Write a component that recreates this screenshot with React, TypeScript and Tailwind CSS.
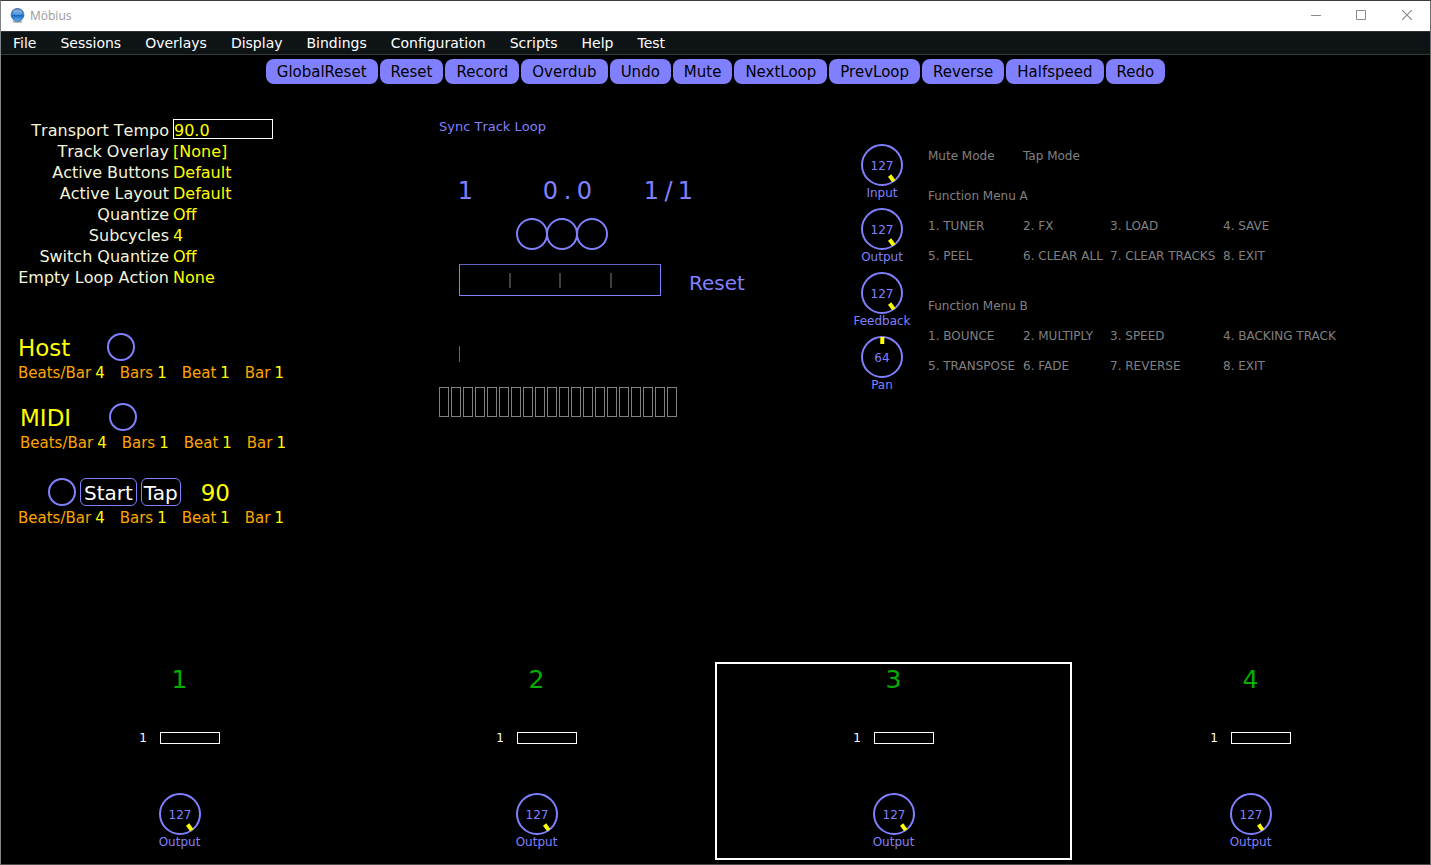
import { useId, useState } from "react";

const menus = ["File", "Sessions", "Overlays", "Display", "Bindings", "Configuration", "Scripts", "Help", "Test"];

const actions = [
  "GlobalReset", "Reset", "Record", "Overdub", "Undo", "Mute",
  "NextLoop", "PrevLoop", "Reverse", "Halfspeed", "Redo",
];

const parameters = [
  ["Track Overlay", "[None]"],
  ["Active Buttons", "Default"],
  ["Active Layout", "Default"],
  ["Quantize", "Off"],
  ["Subcycles", "4"],
  ["Switch Quantize", "Off"],
  ["Empty Loop Action", "None"],
];

const functionMenus = [
  {
    title: "Function Menu A",
    items: ["1. TUNER", "2. FX", "3. LOAD", "4. SAVE", "5. PEEL", "6. CLEAR ALL", "7. CLEAR TRACKS", "8. EXIT"],
  },
  {
    title: "Function Menu B",
    items: ["1. BOUNCE", "2. MULTIPLY", "3. SPEED", "4. BACKING TRACK", "5. TRANSPOSE", "6. FADE", "7. REVERSE", "8. EXIT"],
  },
];

const menuColumns = "grid grid-cols-[95px_87px_113px_auto] auto-rows-[30px] items-center";

function TitleBar() {
  return (
    <header className="flex h-[30px] items-center bg-white pl-2">
      <svg viewBox="0 0 16 16" className="h-4 w-4" aria-hidden="true">
        <defs>
          <linearGradient id="orb" x1="0" y1="0" x2="0" y2="1">
            <stop offset="0" stopColor="#34689f" />
            <stop offset="0.45" stopColor="#3f8fdc" />
            <stop offset="0.55" stopColor="#1a66bc" />
            <stop offset="1" stopColor="#5fb8fa" />
          </linearGradient>
          <linearGradient id="gloss" x1="0" y1="0" x2="0" y2="1">
            <stop offset="0" stopColor="#86b2dc" />
            <stop offset="1" stopColor="#4f98dc" />
          </linearGradient>
        </defs>
        <ellipse cx="8.5" cy="13.4" rx="5" ry="1.5" fill="#b5b5b5" />
        <circle cx="8.5" cy="6.8" r="6.4" fill="url(#orb)" stroke="#2a5688" strokeWidth="0.7" />
        <ellipse cx="8.5" cy="4.2" rx="4.6" ry="2.6" fill="url(#gloss)" />
      </svg>
      <h1 className="ml-[5px] font-['Open_Sans',sans-serif] text-[12px] leading-4 text-[#999999]">Möbius</h1>
      <div className="ml-auto flex h-full pb-0.5 text-[#8c8c8c]">
        <button aria-label="Minimize" className="flex w-[45px] items-center justify-center">
          <svg viewBox="0 0 10 10" className="h-[10px] w-[10px]"><path d="M0 5.5H10" stroke="currentColor" /></svg>
        </button>
        <button aria-label="Maximize" className="flex w-[45px] items-center justify-center">
          <svg viewBox="0 0 10 10" className="h-[10px] w-[10px]"><path d="M.5 .5H9.5V9.5H.5Z" fill="none" stroke="currentColor" /></svg>
        </button>
        <button aria-label="Close" className="flex w-[47px] items-center justify-center">
          <svg viewBox="0 0 10 10" className="h-[10px] w-[10px]"><path d="M0 0L10 10M10 0L0 10" stroke="currentColor" strokeWidth="1.2" /></svg>
        </button>
      </div>
    </header>
  );
}

function Knob({ label, initial }: { label: string; initial: number }) {
  const [value, setValue] = useState(initial);
  const id = useId();
  const angle = Math.round((value / 127) * 288 - 144);
  return (
    <div className="relative flex flex-col items-center text-[#8080ff]">
      <svg viewBox="-21 -21 42 42" className="h-[42px] w-[42px]" aria-hidden="true">
        <circle r="20" fill="none" stroke="currentColor" strokeWidth="2" />
        <rect x="-2" y="-20" width="4" height="7" fill="#ffff00" transform={`rotate(${angle})`} />
        <text y="5" textAnchor="middle" fill="currentColor" className="text-[12px]">{value}</text>
      </svg>
      <label htmlFor={id} className="text-[12px] leading-[14px]">{label}</label>
      <input
        id={id}
        type="range"
        min={0}
        max={127}
        value={value}
        onChange={(e) => setValue(Number(e.target.value))}
        className="absolute inset-x-0 top-0 h-[42px] w-full cursor-pointer opacity-0"
      />
    </div>
  );
}

function BeatInfo() {
  return (
    <dl className="flex gap-[15px] text-[15px] leading-[22px]">
      {[["Beats/Bar", 4], ["Bars", 1], ["Beat", 1], ["Bar", 1]].map(([name, count]) => (
        <div key={name} className="flex gap-1">
          <dt className="text-[#ffa500]">{name}</dt>
          <dd className="text-[#ffff00]">{count}</dd>
        </div>
      ))}
    </dl>
  );
}

function BeatLight() {
  return <span className="h-7 w-7 shrink-0 rounded-full border-2 border-[#8080ff]" />;
}

function SyncSource({ name }: { name: string }) {
  return (
    <section>
      <div className="flex h-[30px] items-center">
        <h2 className="w-[89px] pt-0.5 text-[23px] leading-7 text-[#ffff00]">{name}</h2>
        <BeatLight />
      </div>
      <BeatInfo />
    </section>
  );
}

function Cells({ text }: { text: string }) {
  return (
    <span className="flex">
      {text.split("").map((char, i) => (
        <span key={i} className="w-[17px] text-center">{char}</span>
      ))}
    </span>
  );
}

function LoopStatus() {
  return (
    <section className="pt-[35px] text-[#8080ff]">
      <h2 className="text-[13px] leading-4 [font-kerning:none]">Sync Track Loop</h2>
      <div className="mt-[41px] flex pl-[18px] text-[24px] leading-[30px]">
        <div className="w-[85px]"><Cells text="1" /></div>
        <div className="w-[101px]"><Cells text="0.0" /></div>
        <Cells text="1/1" />
      </div>
      <div className="mt-3 flex pl-[77px]">
        <span className="h-8 w-8 rounded-full border-2 border-[#8080ff]" />
        <span className="-ml-0.5 h-8 w-8 rounded-full border-2 border-[#8080ff]" />
        <span className="-ml-0.5 h-8 w-8 rounded-full border-2 border-[#8080ff]" />
      </div>
      <div className="mt-[14px] flex items-center gap-7 pl-5">
        <div className="flex h-8 w-[202px] items-center justify-evenly border border-[#8080ff] border-t-[#6060c0]">
          <span className="h-[15px] w-0.5 bg-[#404040]" />
          <span className="h-[15px] w-0.5 bg-[#404040]" />
          <span className="h-[15px] w-0.5 bg-[#404040]" />
        </div>
        <span className="pt-1.5 text-[20px] leading-6">Reset</span>
      </div>
      <div className="mt-[50px] ml-5 h-4 w-px bg-[#00b000]" />
      <div className="mt-[25px] flex gap-0.5">
        {Array.from({ length: 20 }, (_, i) => (
          <span key={i} className="h-[30px] w-[10px] border border-[#808080]" />
        ))}
      </div>
    </section>
  );
}

function TrackStrip({ number, selected }: { number: number; selected: boolean }) {
  return (
    <section
      className={
        selected
          ? "flex h-[198px] flex-col items-center border-2 border-white"
          : "flex h-[198px] flex-col items-center border-2 border-transparent"
      }
    >
      <h2 className="text-[25px] leading-8 text-[#00b000]">{number}</h2>
      <div className="mt-9 flex items-center gap-[13px] text-[12px] leading-3">
        <span className="text-white">1</span>
        <span className="h-3 w-[60px] border border-white" />
      </div>
      <div className="mt-[49px]">
        <Knob label="Output" initial={127} />
      </div>
    </section>
  );
}

export default function App() {
  const [tempo, setTempo] = useState("90.0");
  return (
    <div className="flex min-h-screen flex-col border border-t-[#3c3c40] border-r-[#6e6e6e] border-b-[#4a4a4a] border-l-[#808488] bg-black font-['DejaVu_Sans',sans-serif]">
      <TitleBar />
      <nav className="flex h-6 items-center border-t border-b border-t-[#303436] border-b-[#343a3c] bg-[#0e1416] text-[14px] leading-5 text-white">
        {menus.map((name) => (
          <button key={name} className="px-3">{name}</button>
        ))}
      </nav>

      <div className="mt-1 flex flex-wrap justify-center gap-0.5">
        {actions.map((name) => (
          <button key={name} className="h-[25px] rounded-lg bg-[#8080ff] px-[11px] pt-px text-[15px] leading-5 text-black">
            {name}
          </button>
        ))}
      </div>

      <main className="grid grid-cols-[438fr_414fr_577fr]">
        <div className="pt-[35px]">
          <div className="text-[16px] leading-[23px] text-[#f5f5dc] [font-kerning:none]">
            <div className="flex h-[21px] items-start gap-1">
              <label htmlFor="tempo" className="w-[168px] text-right">Transport Tempo</label>
              <input
                id="tempo"
                value={tempo}
                onChange={(e) => setTempo(e.target.value)}
                className="h-5 w-[100px] border border-white bg-black pt-0.5 text-[#ffff00] outline-none"
              />
            </div>
            {parameters.map(([name, value]) => (
              <div key={name} className="flex h-[21px] gap-1">
                <span className="w-[168px] text-right">{name}</span>
                <span className="text-[#ffff00]">{value}</span>
              </div>
            ))}
          </div>
          <div className="mt-[45px] pl-[17px]"><SyncSource name="Host" /></div>
          <div className="mt-[18px] pl-[19px]"><SyncSource name="MIDI" /></div>
          <section className="mt-[23px] pl-[17px]">
            <div className="flex h-[30px] items-center gap-1 pl-[30px]">
              <BeatLight />
              <button className="h-7 rounded-md border border-[#8080ff] px-[3px] pt-px text-[20px] leading-6 text-white">Start</button>
              <button className="h-7 rounded-md border border-[#8080ff] px-0.5 pt-px text-[20px] leading-6 text-white">Tap</button>
              <span className="pt-0.5 pl-4 text-[23px] leading-7 text-[#ffff00]">90</span>
            </div>
            <BeatInfo />
          </section>
        </div>

        <LoopStatus />

        <div className="flex items-start gap-[17px] pt-[57px]">
          <div className="flex w-[58px] shrink-0 flex-col gap-2 pt-[3px]">
            <Knob label="Input" initial={127} />
            <Knob label="Output" initial={127} />
            <Knob label="Feedback" initial={127} />
            <Knob label="Pan" initial={64} />
          </div>
          <div className="text-[12px] leading-4 whitespace-nowrap text-[#808080]">
            <div className={menuColumns}>
              <span>Mute Mode</span>
              <span>Tap Mode</span>
            </div>
            <div className="mt-[10px] flex flex-col gap-5">
              {functionMenus.map((menu) => (
                <section key={menu.title}>
                  <h2 className="leading-[30px]">{menu.title}</h2>
                  <div className={menuColumns}>
                    {menu.items.map((item) => (
                      <span key={item}>{item}</span>
                    ))}
                  </div>
                </section>
              ))}
            </div>
          </div>
        </div>
      </main>

      <footer className="mt-auto mb-1 grid grid-cols-4 pr-px">
        {[1, 2, 3, 4].map((n) => (
          <TrackStrip key={n} number={n} selected={n === 3} />
        ))}
      </footer>
    </div>
  );
}
